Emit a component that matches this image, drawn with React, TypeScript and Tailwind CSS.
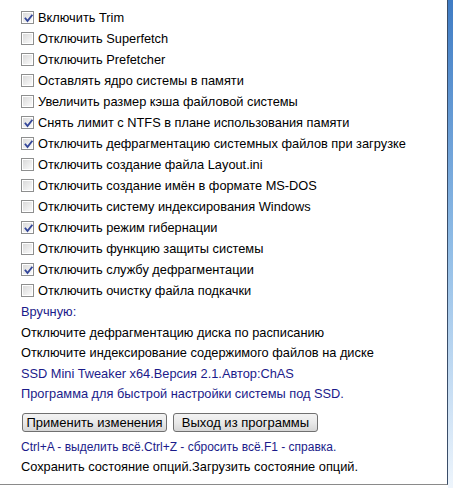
import React from "react";

const items: [string, boolean][] = [
  ["Включить Trim", true],
  ["Отключить Superfetch", false],
  ["Отключить Prefetcher", false],
  ["Оставлять ядро системы в памяти", false],
  ["Увеличить размер кэша файловой системы", false],
  ["Снять лимит с NTFS в плане использования памяти", true],
  ["Отключить дефрагментацию системных файлов при загрузке", true],
  ["Отключить создание файла Layout.ini", false],
  ["Отключить создание имён в формате MS-DOS", false],
  ["Отключить систему индексирования Windows", false],
  ["Отключить режим гибернации", true],
  ["Отключить функцию защиты системы", false],
  ["Отключить службу дефрагментации", true],
  ["Отключить очистку файла подкачки", false],
];

function Check({ checked }: { checked: boolean }) {
  return (
    <div className="w-[13px] h-[13px] border border-[#8e8f8f] bg-white p-px shrink-0">
      <div className="w-full h-full bg-gradient-to-br from-[#dadada] to-[#fafafa] relative">
        {checked && (
          <svg width="11" height="11" viewBox="0 0 11 11" className="absolute left-0 top-0">
            <path d="M2.5 5.5 L4.5 8 L8.8 2.5" fill="none" stroke="#34479a" strokeWidth="1.9" strokeLinecap="square" />
          </svg>
        )}
      </div>
    </div>
  );
}

function Btn({ label, w }: { label: string; w: string }) {
  return (
    <div
      className={`${w} h-[19px] rounded-[3px] border border-[#707070] bg-gradient-to-b from-[#f3f3f3] via-[#e9e9e9] to-[#d6d6d6] flex items-center justify-center text-[13px] text-black leading-none`}
    >
      {label}
    </div>
  );
}

export default function App() {
  return (
    <div
      className="flex w-[453px] h-[488px] bg-white overflow-hidden"
      style={{ fontFamily: '"Liberation Sans", Arial, sans-serif' }}
    >
      <div className="w-[448px] h-[485px] border-r border-b border-r-[#3a4d68] border-b-[#8a8a8a] pl-[21px] pt-[7px] flex flex-col text-[12.8px] text-black">
        {items.map(([t, c]) => (
          <div key={t} className="h-[21px] leading-[21px] flex items-center gap-[4px]">
            <Check checked={c} />
            <span>{t}</span>
          </div>
        ))}
        <div className="leading-[20.5px] text-[#1b1b8a] mt-px">Вручную:</div>
        <div className="leading-[20.5px]">Отключите дефрагментацию диска по расписанию</div>
        <div className="leading-[20.5px]">Отключите индексирование содержимого файлов на диске</div>
        <div className="leading-[20.5px] text-[#1b1b8a]">SSD Mini Tweaker x64.Версия 2.1.Автор:ChAS</div>
        <div className="leading-[20.5px] text-[#1b1b8a]">Программа для быстрой настройки системы под SSD.</div>
        <div className="flex gap-[6px] mt-[8px] pl-px">
          <Btn label="Применить изменения" w="w-[145px]" />
          <Btn label="Выход из программы" w="w-[145px]" />
        </div>
        <div className="leading-[20px] text-[12px] text-[#1b1b8a] mt-[5px]">
          Ctrl+A - выделить всё.Ctrl+Z - сбросить всё.F1 - справка.
        </div>
        <div className="leading-[20px]">Сохранить состояние опций.Загрузить состояние опций.</div>
      </div>
      <div className="w-[5px] h-[488px] bg-gradient-to-b from-[#3f7cc4] via-[#8fbce6] to-[#eef5fc]" />
    </div>
  );
}
